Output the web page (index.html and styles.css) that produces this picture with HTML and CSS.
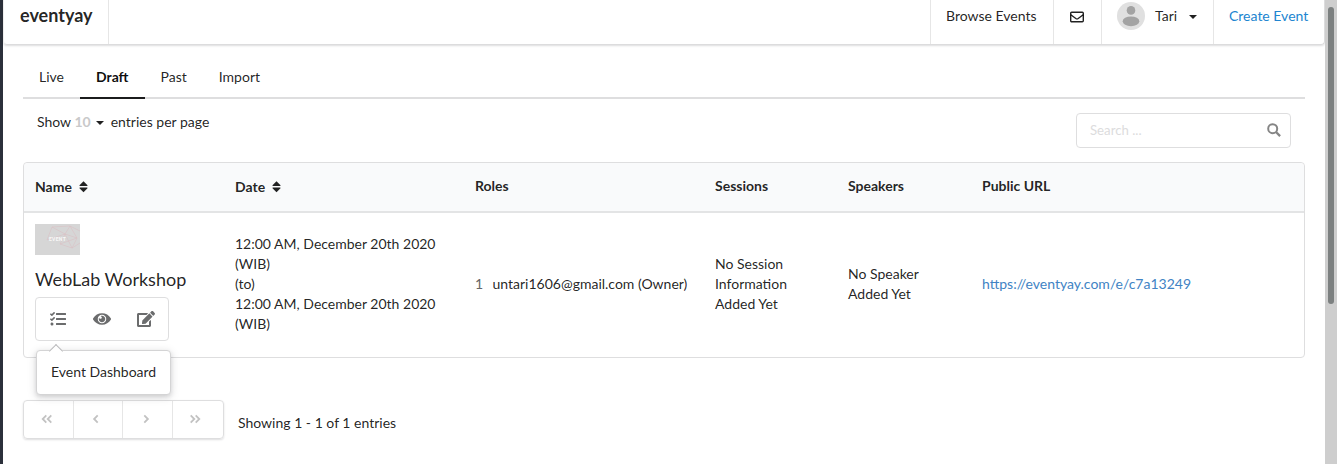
FILE: index.html
```html
<!DOCTYPE html>
<html lang="en">
<head>
<meta charset="utf-8">
<title>eventyay</title>
<link rel="stylesheet" href="styles.css">
</head>
<body>
<div class="app">
  <div class="edge"></div>
  <div class="page">
    <header class="navbar">
      <a class="brand">eventyay</a>
      <nav class="nav-right">
        <a class="nav-item browse">Browse Events</a>
        <a class="nav-item mail"><svg width="14" height="14" viewBox="0 0 14 14" fill="none" stroke="currentColor" stroke-width="1.4"><rect x=".7" y="2.2" width="12.6" height="9.6" rx="1"/><path d="M.8 4.7 5.8 8.5Q7 9.3 8.2 8.5L13.2 4.7"/></svg></a>
        <a class="nav-item user"><svg class="avatar" width="28" height="28" viewBox="0 0 28 28"><circle cx="14" cy="14" r="14" fill="#e0e0e0"/><circle cx="14" cy="8.4" r="4.3" fill="#a3a3a3"/><ellipse cx="14" cy="19.3" rx="8.3" ry="4.9" fill="#a3a3a3"/></svg><span>Tari</span><i class="caret"></i></a>
        <a class="nav-item create">Create Event</a>
      </nav>
    </header>
    <main class="content">
      <nav class="tabs">
        <a class="tab">Live</a><a class="tab active">Draft</a><a class="tab">Past</a><a class="tab">Import</a>
      </nav>
      <div class="controls">
        <div class="show">Show <span class="count">10</span><i class="caret"></i><span>entries per page</span></div>
        <div class="search"><span>Search ...</span><svg width="14" height="14" viewBox="0 0 14 14" fill="none" stroke="currentColor"><circle cx="5.7" cy="5.7" r="4.5" stroke-width="2"/><path d="m9 9 4.1 4.1" stroke-width="2.3"/></svg></div>
      </div>
      <div class="table">
        <div class="row head">
          <div class="sortable">Name<svg class="sort" width="9" height="14" viewBox="0 0 9 14"><path d="M4.5 1.2 8.5 5.2Q8.8 6 8 6H1Q.2 6 .5 5.2ZM4.5 12.2 8.5 8.2Q8.8 7.4 8 7.4H1Q.2 7.4 .5 8.2Z" fill="currentColor"/></svg></div>
          <div class="sortable">Date<svg class="sort" width="9" height="14" viewBox="0 0 9 14"><path d="M4.5 1.2 8.5 5.2Q8.8 6 8 6H1Q.2 6 .5 5.2ZM4.5 12.2 8.5 8.2Q8.8 7.4 8 7.4H1Q.2 7.4 .5 8.2Z" fill="currentColor"/></svg></div>
          <div>Roles</div><div>Sessions</div><div>Speakers</div><div>Public URL</div>
        </div>
        <div class="row body">
          <div class="event">
            <div class="thumb"><svg width="45" height="31" viewBox="0 0 45 31" fill="none" stroke="#dbbcc0" stroke-width=".5"><path d="M12 16 17 3 35 2 42 14 37 24 25 20 30 10 35 2M12 16 30 10 42 14M25 20 42 14M37 24 45 19M30 10 37 24M17 3 30 10M35 2 45 7"/></svg><span>EVENT</span></div>
            <div class="title">WebLab Workshop</div>
            <div class="actions">
              <a><svg width="16" height="16" viewBox="0 0 512 512"><path d="M139.61 35.5a12 12 0 0 0-17 0L58.93 98.81l-22.7-22.12a12 12 0 0 0-17 0L3.53 92.41a12 12 0 0 0 0 17l47.59 47.4a12.78 12.78 0 0 0 17.61 0l15.59-15.62L156.52 69a12.09 12.09 0 0 0 .09-17zm0 159.19a12 12 0 0 0-17 0l-63.68 63.72-22.7-22.1a12 12 0 0 0-17 0L3.53 252a12 12 0 0 0 0 17L51 316.5a12.77 12.77 0 0 0 17.6 0l15.7-15.69 72.2-72.22a12 12 0 0 0 .09-16.9zM64 368c-26.49 0-48.59 21.5-48.59 48S37.53 464 64 464a48 48 0 0 0 0-96zm432 16H208a16 16 0 0 0-16 16v32a16 16 0 0 0 16 16h288a16 16 0 0 0 16-16v-32a16 16 0 0 0-16-16zm0-320H208a16 16 0 0 0-16 16v32a16 16 0 0 0 16 16h288a16 16 0 0 0 16-16V80a16 16 0 0 0-16-16zm0 160H208a16 16 0 0 0-16 16v32a16 16 0 0 0 16 16h288a16 16 0 0 0 16-16v-32a16 16 0 0 0-16-16z"/></svg></a>
              <a><svg width="18" height="16" viewBox="0 0 576 512"><path d="M569.354 231.631C512.969 135.949 407.81 72 288 72 168.14 72 63.004 135.994 6.646 231.631a47.999 47.999 0 0 0 0 48.739C63.031 376.051 168.19 440 288 440c119.86 0 224.996-63.994 281.354-159.631a47.997 47.997 0 0 0 0-48.738zM288 392c-75.162 0-136-60.827-136-136 0-75.162 60.826-136 136-136 75.162 0 136 60.826 136 136 0 75.162-60.826 136-136 136zm104-136c0 57.438-46.562 104-104 104s-104-46.562-104-104c0-17.708 4.431-34.379 12.236-48.973l-.001.032c0 23.651 19.173 42.823 42.824 42.823s42.824-19.173 42.824-42.823c0-23.651-19.173-42.824-42.824-42.824l-.032.001C253.621 156.431 270.292 152 288 152c57.438 0 104 46.562 104 104z"/></svg></a>
              <a><svg width="18" height="16" viewBox="0 0 576 512"><path d="M402.6 83.2l90.2 90.2c3.8 3.8 3.8 10 0 13.8L274.4 405.6l-92.8 10.3c-12.4 1.4-22.9-9.1-21.5-21.5l10.3-92.8L388.8 83.2c3.8-3.8 10-3.8 13.8 0zm162-22.9l-48.8-48.8c-15.2-15.2-39.9-15.2-55.2 0l-35.4 35.4c-3.8 3.8-3.8 10 0 13.8l90.2 90.2c3.8 3.8 10 3.8 13.8 0l35.4-35.4c15.2-15.3 15.2-40 0-55.2zM384 346.2V448H64V128h229.8c3.2 0 6.2-1.3 8.5-3.5l40-40c7.6-7.6 2.2-20.5-8.5-20.5H48C21.5 64 0 85.5 0 112v352c0 26.5 21.5 48 48 48h352c26.5 0 48-21.5 48-48V306.2c0-10.7-12.9-16-20.5-8.5l-40 40c-2.2 2.3-3.5 5.3-3.5 8.5z"/></svg></a>
              <div class="tooltip">Event Dashboard</div>
            </div>
          </div>
          <div>12:00 AM, December 20th 2020<br>(WIB)<br>(to)<br>12:00 AM, December 20th 2020<br>(WIB)</div>
          <div class="roles"><span class="num">1</span><span>untari1606@gmail.com (Owner)</span></div>
          <div>No Session<br>Information<br>Added Yet</div>
          <div>No Speaker<br>Added Yet</div>
          <div><a class="link">https://eventyay.com/e/c7a13249</a></div>
        </div>
      </div>
      <div class="footer">
        <div class="pager">
          <a><svg width="12" height="12" viewBox="0 0 12 12"><path d="M5.3 2.4 1.7 6l3.6 3.6M10.3 2.4 6.7 6l3.6 3.6"/></svg></a>
          <a><svg width="12" height="12" viewBox="0 0 12 12"><path d="M7.7 2.4 4.1 6l3.6 3.6"/></svg></a>
          <a><svg width="12" height="12" viewBox="0 0 12 12"><path d="M4.3 2.4 7.9 6 4.3 9.6"/></svg></a>
          <a><svg width="12" height="12" viewBox="0 0 12 12"><path d="M1.7 2.4 5.3 6 1.7 9.6M6.7 2.4 10.3 6 6.7 9.6"/></svg></a>
        </div>
        <div class="summary">Showing 1 - 1 of 1 entries</div>
      </div>
    </main>
  </div>
  <div class="scrollbar"><div class="thumb-bar"></div></div>
</div>
</body>
</html>
```
FILE: styles.css
```css
* { box-sizing: border-box; }
body { margin: 0; font: 14px/20px Lato, sans-serif; color: rgba(0,0,0,.87); background: #fff; }
svg { display: block; flex: none; }
.app { display: flex; height: 464px; overflow: hidden; }
.edge { width: 3px; background: #2b303b; }
.page { width: 1322px; }
.navbar { display: flex; justify-content: space-between; height: 45px; border: 1px solid #dcdcdd; border-top: 0; border-left-color: #eee; border-radius: 0 0 4px 4px; box-shadow: 0 1px 2px rgba(34,36,38,.15); }
.brand { width: 105px; padding: 5px 0 0 16px; border-right: 1px solid #e6e6e6; font-size: 18px; font-weight: 700; }
.nav-right { display: flex; }
.nav-item { display: flex; height: 44px; padding: 0 15px 12px 15px; align-items: center; border-left: 1px solid #e6e6e6; white-space: nowrap; }
.browse { width: 123px; }
.mail { width: 48px; }
.mail svg { margin: 1px 0 0 1px; }
.user { width: 112px; }
.user span { margin-left: 10px; width: 34px; }
.create { width: 111px; color: #2185d0; }
.caret { width: 0; height: 0; border: 4px solid transparent; border-top-color: currentColor; border-bottom: 0; }
.user .caret { margin-top: 1px; }
.content { padding: 12px 20px 0; }
.tabs { display: flex; height: 42px; border-bottom: 2px solid #dededf; }
.tab { height: 42px; padding: 10px 16px 0; border-bottom: 2px solid transparent; }
.tab.active { color: rgba(0,0,0,.95); border-color: #1b1c1d; font-weight: 700; }
.controls { display: flex; justify-content: space-between; height: 63px; padding: 14px 14px 0; }
.show { display: flex; height: 18px; align-items: center; white-space: pre; }
.count { color: #c9c9ca; font-weight: 700; }
.show .caret { margin: 2px 6px 0 5px; }
.show .caret + span { margin-left: 1px; }
.search { display: flex; align-items: center; justify-content: space-between; width: 215px; height: 35px; padding: 0 9px 2px 13px; border: 1px solid #dededf; border-radius: 4px; color: #dcdcdd; font-size: 13.2px; }
.search svg { color: #858585; }
.table { border: 1px solid #dededf; border-radius: 4px; }
.row { display: grid; grid-template-columns: 200px 240px 240px 133px 134px 1fr; align-items: center; }
.row > div { padding: 0 11px; }
.head { height: 50px; background: #f9fafb; border-bottom: 2px solid #e3e4e5; border-radius: 4px 4px 0 0; font-weight: 700; }
.head > div { display: flex; align-items: center; padding-bottom: 2px; }
.head > .sortable { padding-bottom: 0; }
.sort { margin-left: 7px; }
.body { height: 144px; }
.body > div { padding-bottom: 2px; }
.body > .event { padding-bottom: 6px; }
.thumb { display: grid; width: 45px; height: 31px; background: #d6d6d6; place-items: center; }
.thumb > * { grid-area: 1 / 1; }
.thumb span { color: #f8f8f8; font: 700 5px/6px Roboto, sans-serif; letter-spacing: .35px; }
.title { margin: 14px 0 7px; font-size: 18px; line-height: 21px; white-space: nowrap; }
.actions { position: relative; display: flex; width: 134px; height: 44px; border: 1px solid #dededf; border-radius: 4px; }
.actions a { display: flex; width: 44px; align-items: center; justify-content: center; }
.actions a svg { fill: #6b6c6d; }
.tooltip { position: absolute; left: 0; top: 52px; width: 135px; height: 45px; padding: 11px 0 0 14px; background: #fff; border: 1px solid #d4d4d5; border-radius: 4px; box-shadow: 0 2px 4px rgba(34,36,38,.12), 0 2px 10px rgba(34,36,38,.15); white-space: nowrap; }
.tooltip::before { content: ""; position: absolute; left: 14px; top: -5px; width: 9px; height: 9px; background: #fff; border: solid #bababc; border-width: 1px 0 0 1px; transform: rotate(45deg); }
.roles { display: flex; white-space: nowrap; }
.num { width: 17.5px; color: #666; }
.link { color: #4183c4; }
.footer { display: flex; padding-top: 42px; }
.pager { display: flex; width: 201px; height: 39px; border: 1px solid #dededf; border-radius: 4px; box-shadow: 0 1px 2px rgba(34,36,38,.15); }
.pager a { display: flex; width: 50px; padding: 0 4px 1px 0; align-items: center; justify-content: center; border-right: 1px solid #e6e6e6; }
.pager a:nth-child(2) { width: 49px; }
.pager a:last-child { padding-right: 6px; border: 0; }
.pager path { fill: none; stroke: #c2c2c2; stroke-width: 1.8; }
.summary { padding: 13px 0 0 14px; }
.scrollbar { width: 12px; height: 464px; padding: 7px 0 0 3px; background: #cecece; }
.thumb-bar { width: 6px; height: 297px; border-radius: 3px; background: #7c8080; }
```
